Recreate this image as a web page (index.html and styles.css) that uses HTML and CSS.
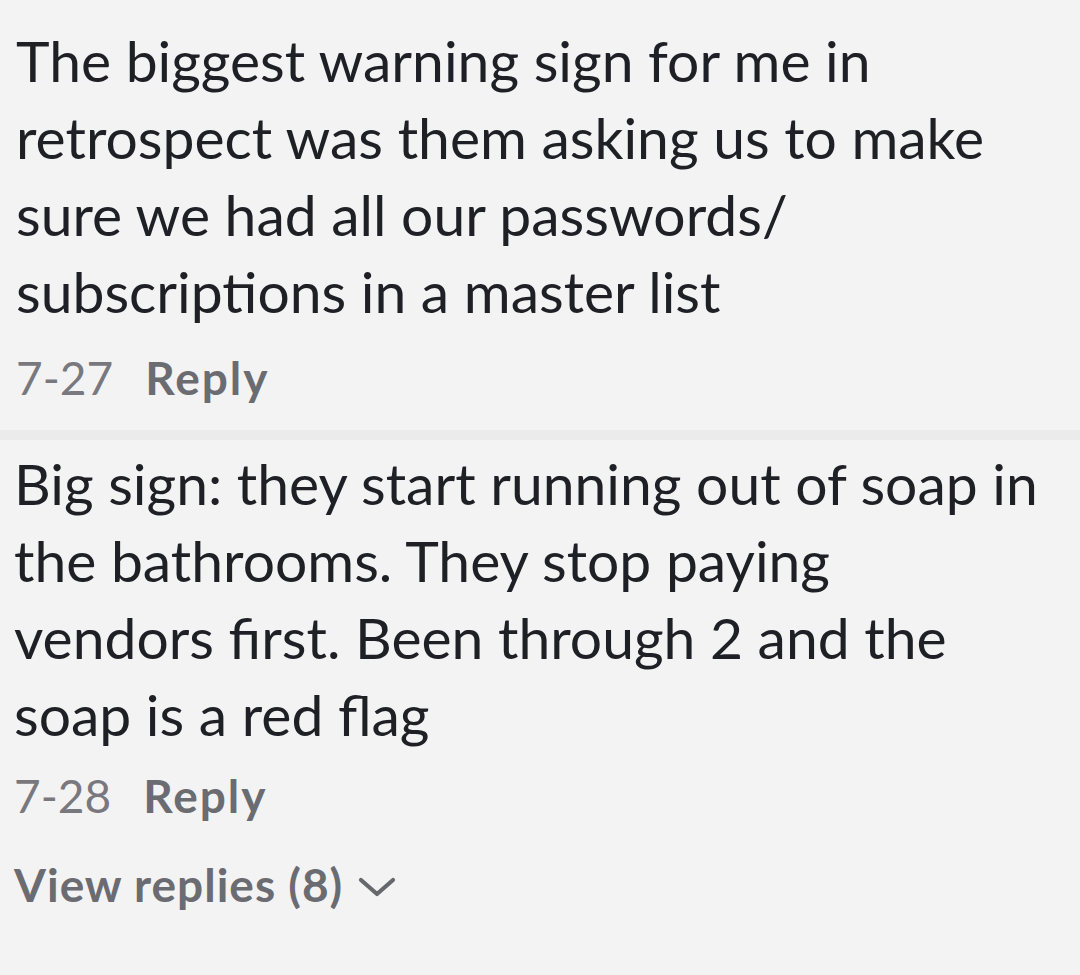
FILE: index.html
```html
<!DOCTYPE html>
<html>
  <head>
    <title>Comments</title>
    <link rel="stylesheet" href="styles.css">
  </head>
  <body>
    <div class="comment first">
      <p class="text">The biggest warning sign for me in<br />retrospect was them asking us to make<br />sure we had all our passwords/<br />subscriptions in a master list</p>
      <div class="meta"><span class="date">7-27</span><span class="reply">Reply</span></div>
    </div>
    <div class="divider"></div>
    <div class="comment second">
      <p class="text">Big sign: they start running out of soap in<br />the bathrooms. They stop paying<br />vendors first. Been through 2 and the<br />soap is a red flag</p>
      <div class="meta"><span class="date">7-28</span><span class="reply">Reply</span></div>
      <div class="view-replies">
        View replies (8)
        <svg class="chevron" width="40" height="22" viewBox="0 0 40 22">
          <path d="M4 4 L20 18 L36 4" fill="none" stroke="#67676e" stroke-width="4.2" stroke-linecap="round" stroke-linejoin="round" />
        </svg>
      </div>
    </div>
  </body>
</html>
```
FILE: styles.css
```css
body {
  margin: 0;
  background-color: #f4f3f3;
  font-family: Lato, "Open Sans", sans-serif;
  color: #1f1f26;
}

.comment {
  padding-left: 16px;
}

.comment.second {
  padding-left: 14px;
}

.text {
  margin: 0;
  font-size: 57px;
  line-height: 77px;
}

.first .text {
  padding-top: 22px;
}

.second .text {
  padding-top: 5px;
}

.meta {
  display: flex;
  gap: 32px;
  font-size: 46px;
  line-height: 60px;
  margin-top: 18px;
}

.first .meta {
  padding-bottom: 22px;
}

.second .meta {
  margin-top: 13px;
}

.date {
  color: #78787e;
}

.reply {
  color: #6b6b72;
  font-weight: 700;
  letter-spacing: 2px;
}

.divider {
  height: 10px;
  background-color: #ebebeb;
}

.view-replies {
  display: flex;
  align-items: center;
  gap: 14px;
  font-size: 46px;
  line-height: 56px;
  font-weight: 700;
  letter-spacing: 1px;
  color: #6b6b72;
  margin-top: 31px;
}

.chevron {
  margin-top: 4px;
}
```
